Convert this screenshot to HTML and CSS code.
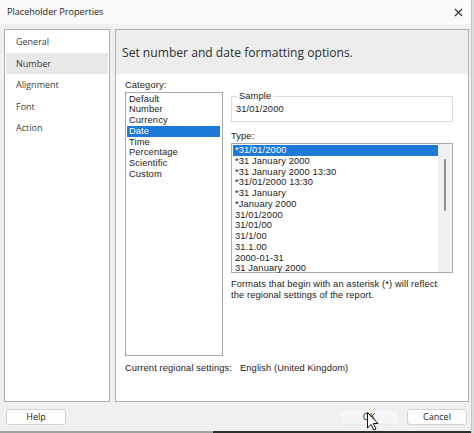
FILE: index.html
```html
<!DOCTYPE html>
<html lang="en">
<head>
<meta charset="utf-8">
<title>Placeholder Properties</title>
<link rel="stylesheet" href="styles.css">
</head>
<body>
<div class="window">
  <div class="titlebar">
    <span class="title">Placeholder Properties</span>
    <svg class="close" width="9" height="9" viewBox="0 0 9 9"><path d="M1 1 L8 8 M8 1 L1 8" stroke="#2b2b2b" stroke-width="1.1" fill="none"/></svg>
  </div>
  <div class="main">
    <ul class="nav">
      <li>General</li>
      <li class="active">Number</li>
      <li>Alignment</li>
      <li>Font</li>
      <li>Action</li>
    </ul>
    <div class="panel">
      <div class="panel-head">Set number and date formatting options.</div>
      <div class="panel-body">
        <div class="cols">
          <div class="col-left">
            <div class="label">Category:</div>
            <ul class="listbox cat">
              <li>Default</li>
              <li>Number</li>
              <li>Currency</li>
              <li class="sel">Date</li>
              <li>Time</li>
              <li>Percentage</li>
              <li>Scientific</li>
              <li>Custom</li>
            </ul>
          </div>
          <div class="col-right">
            <fieldset class="sample">
              <legend>Sample</legend>
              <div class="sample-value">31/01/2000</div>
            </fieldset>
            <div class="label type-label">Type:</div>
            <div class="listbox typelist">
              <ul class="items">
                <li class="sel">*31/01/2000</li>
                <li>*31 January 2000</li>
                <li>*31 January 2000 13:30</li>
                <li>*31/01/2000 13:30</li>
                <li>*31 January</li>
                <li>*January 2000</li>
                <li>31/01/2000</li>
                <li>31/01/00</li>
                <li>31/1/00</li>
                <li>31.1.00</li>
                <li>2000-01-31</li>
                <li>31 January 2000</li>
              </ul>
              <div class="scrollbar"><div class="thumb"></div></div>
            </div>
            <p class="note">Formats that begin with an asterisk (*) will reflect<br>the regional settings of the report.</p>
          </div>
        </div>
        <div class="regional"><span class="reg-label">Current regional settings:</span><span>English (United Kingdom)</span></div>
      </div>
    </div>
  </div>
  <div class="footer">
    <button class="btn help">Help</button>
    <div class="spacer"></div>
    <button class="btn ok">OK</button>
    <button class="btn">Cancel</button>
  </div>
  <div class="bottom-edge"></div>
  <svg class="cursor" width="12" height="19" viewBox="0 0 12 19"><path d="M0.5 0.5 L0.5 16 L4.2 12.4 L6.8 18 L9 17 L6.4 11.5 L11 11.5 Z" fill="#fff" stroke="#111" stroke-width="1" stroke-linejoin="round"/></svg>
</div>
</body>
</html>
```
FILE: styles.css
```css
* { box-sizing: border-box; }
html, body { margin: 0; padding: 0; }
body {
  width: 474px;
  height: 433px;
  overflow: hidden;
  background: #dcdcdc;
  font-family: "Open Sans", "Noto Sans", sans-serif;
  font-size: 9px;
  color: #1e1e1e;
}
.window {
  position: relative;
  width: 472px;
  height: 433px;
  background: #f0f0f0;
  border-right: 1px solid #c4c4c4;
  display: flex;
  flex-direction: column;
}
.titlebar {
  height: 24px;
  flex: none;
  background: #fafafa;
  display: flex;
  align-items: center;
  padding: 0 6px 0 7px;
}
.title { font-size: 9.1px; color: #1a1a1a; flex: 1; padding-bottom: 1px; }
.close { margin-right: 2px; }
.main {
  flex: none;
  height: 378px;
  display: flex;
  gap: 5px;
  padding: 5px 2px 0 4px;
}
.nav {
  list-style: none;
  margin: 0;
  padding: 1px 1px 0 1px;
  width: 106px;
  height: 373px;
  background: #fff;
  border: 1px solid #b0b0b0;
}
.nav li {
  height: 21.5px;
  line-height: 21.5px;
  padding-left: 10px;
  font-size: 9px;
  color: #3a3a3a;
}
.nav li.active { background: #e8e8e8; }
.panel {
  width: 354px;
  height: 373px;
  background: #fff;
  border: 1px solid #b0b0b0;
  display: flex;
  flex-direction: column;
}
.panel-head {
  height: 44px;
  flex: none;
  background: #ededed;
  padding-left: 6px;
  display: flex;
  align-items: center;
  font-size: 12.1px;
  color: #2e2e2e;
}
.panel-body {
  padding: 5px 15px 0 9px;
  font-family: "Liberation Sans", Arial, sans-serif;
  font-size: 9.3px;
  letter-spacing: 0.12px;
  color: #1a1a1a;
}
.cols { display: flex; gap: 8px; align-items: flex-start; }
.col-left { width: 98px; flex: none; }
.col-right { flex: 1; min-width: 0; }
.label { height: 12px; line-height: 12px; }
.listbox {
  list-style: none;
  margin: 0;
  background: #fff;
  border: 1px solid #a8a8a8;
}
.cat { margin-top: 1px; height: 264px; padding: 0.5px 1px; }
.listbox li {
  height: 10.75px;
  line-height: 10.75px;
  padding-left: 2px;
  white-space: nowrap;
}
.cat li { padding-left: 2px; margin-right: 1px; }
.listbox li.sel { background: #1e7ad9; color: #fff; }
.sample {
  margin: 12px 0 0 0;
  padding: 0 4px 0 4px;
  height: 31px;
  border: 1px solid #dadada;
  min-width: 0;
}
.sample legend {
  padding: 0 2px;
  margin-left: 1px;
  line-height: 10px;
}
.sample-value { line-height: 11px; margin-top: 3px; }
.type-label { margin-top: 8px; }
.typelist {
  margin-top: 1px;
  height: 130px;
  display: flex;
  padding: 1px 0 0 1px;
}
.items { list-style: none; margin: 0; padding: 0; flex: 1; }
.scrollbar {
  width: 14px;
  margin-top: -1px;
  background: #f0f0f0;
  padding-top: 15px;
  display: flex;
  justify-content: center;
}
.thumb { width: 2px; height: 52px; background: #8c8c8c; border-radius: 1px; }
.note { margin: 6px 0 0 0; line-height: 10.75px; }
.regional { margin-top: 7px; line-height: 11px; }
.reg-label { margin-right: 8px; }
.footer {
  flex: none;
  height: 29px;
  display: flex;
  align-items: flex-start;
  gap: 8px;
  padding: 7px 4px 0 6px;
}
.spacer { flex: 1; }
.btn {
  width: 60px;
  height: 16px;
  padding: 0;
  border: 1px solid #d2d2d2;
  border-radius: 3px;
  background: #fdfdfd;
  font-family: inherit;
  font-size: 9px;
  color: #1a1a1a;
  line-height: 14px;
}
.btn.ok { background: #f5f5f5; border-color: #ebebeb; }
.bottom-edge {
  flex: 1;
  background: linear-gradient(to right, #a0a0a0 0, #a0a0a0 213px, #2e2e2e 213px);
}
.cursor { position: absolute; left: 367px; top: 412px; }
```
